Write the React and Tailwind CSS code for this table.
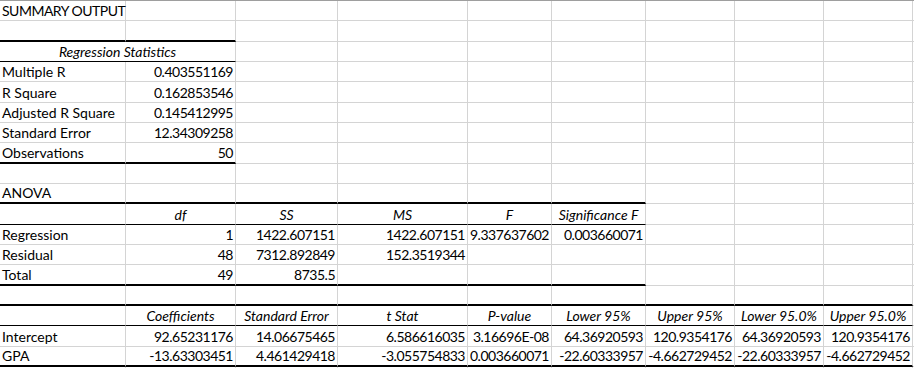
import React from "react";

const rows = [
  { cells: [{ t: "SUMMARY OUTPUT", tight: true }] },
  { cells: [], b: { thick: 2 } },
  { merged: "Regression Statistics", b: { thin: 2 } },
  { cells: [{ t: "Multiple R" }, { t: "0.403551169", a: "r" }] },
  { cells: [{ t: "R Square" }, { t: "0.162853546", a: "r" }] },
  { cells: [{ t: "Adjusted R Square" }, { t: "0.145412995", a: "r" }] },
  { cells: [{ t: "Standard Error" }, { t: "12.34309258", a: "r" }] },
  { cells: [{ t: "Observations" }, { t: "50", a: "r" }], b: { thick: 2 } },
  { cells: [] },
  { cells: [{ t: "ANOVA" }], b: { thick: 6 } },
  {
    cells: [
      { t: "" },
      { t: "df", a: "c", i: true },
      { t: "SS", a: "c", i: true },
      { t: "MS", a: "c", i: true },
      { t: "F", a: "c", i: true },
      { t: "Significance F", a: "c", i: true },
    ],
    b: { thin: 6 },
  },
  {
    cells: [
      { t: "Regression" },
      { t: "1", a: "r" },
      { t: "1422.607151", a: "r" },
      { t: "1422.607151", a: "r" },
      { t: "9.337637602", a: "r" },
      { t: "0.003660071", a: "r" },
    ],
  },
  {
    cells: [
      { t: "Residual" },
      { t: "48", a: "r" },
      { t: "7312.892849", a: "r" },
      { t: "152.3519344", a: "r" },
    ],
  },
  {
    cells: [{ t: "Total" }, { t: "49", a: "r" }, { t: "8735.5", a: "r" }],
    b: { thick: 6 },
  },
  { cells: [], b: { thick: 9 } },
  {
    cells: [
      { t: "" },
      { t: "Coefficients", a: "c", i: true },
      { t: "Standard Error", a: "c", i: true },
      { t: "t Stat", a: "c", i: true },
      { t: "P-value", a: "c", i: true },
      { t: "Lower 95%", a: "c", i: true },
      { t: "Upper 95%", a: "c", i: true },
      { t: "Lower 95.0%", a: "c", i: true },
      { t: "Upper 95.0%", a: "c", i: true },
    ],
    b: { thin: 9 },
  },
  {
    cells: [
      { t: "Intercept" },
      { t: "92.65231176", a: "r" },
      { t: "14.06675465", a: "r" },
      { t: "6.586616035", a: "r" },
      { t: "3.16696E-08", a: "r" },
      { t: "64.36920593", a: "r" },
      { t: "120.9354176", a: "r" },
      { t: "64.36920593", a: "r" },
      { t: "120.9354176", a: "r" },
    ],
  },
  {
    cells: [
      { t: "GPA" },
      { t: "-13.63303451", a: "r" },
      { t: "4.461429418", a: "r" },
      { t: "-3.055754833", a: "r" },
      { t: "0.003660071", a: "r" },
      { t: "-22.60333957", a: "r" },
      { t: "-4.662729452", a: "r" },
      { t: "-22.60333957", a: "r" },
      { t: "-4.662729452", a: "r" },
    ],
    b: { thick: 9 },
  },
  { cells: [] },
];

function Cell({ c, bottom, span }) {
  const isNum = c && c.a === "r";
  const align = isNum
    ? "justify-end pr-[2px]"
    : c && c.a === "c"
    ? "justify-center"
    : "justify-start pl-[2px]";
  const border =
    bottom === "thick"
      ? "border-b-2 border-b-black"
      : bottom === "thin"
      ? "border-b border-b-black"
      : "border-b border-b-[#d4d4d4]";
  const track = isNum
    ? "tracking-[-0.5px]"
    : c && c.tight
    ? "tracking-[-0.5px]"
    : "";
  return (
    <div
      className={`flex items-end overflow-visible whitespace-nowrap border-r border-r-[#d4d4d4] pb-[1px] leading-[17px] ${border} ${align} ${track} ${
        c && c.i ? "italic" : ""
      } ${span ? "col-span-2" : ""}`}
    >
      {c ? c.t : ""}
    </div>
  );
}

export default function App() {
  return (
    <div className="h-[368px] w-[914px] overflow-hidden bg-white text-[14px] text-black [font-family:Lato,'Liberation_Sans',sans-serif]">
      <div className="border-t border-t-[#9e9e9e]">
        <div className="grid grid-cols-[126px_110px_102px_130px_84px_94px_89px_89px_89px_1fr] grid-rows-[20px_21px_20px_20px_21px_20px_20px_21px_20px_20px_21px_20px_20px_21px_20px_20px_21px_20px_20px]">
          {rows.map((row, ri) => {
            const thick = row.b && row.b.thick ? row.b.thick : 0;
            const thin = row.b && row.b.thin ? row.b.thin : 0;
            const kindFor = (ci) =>
              ci < thick ? "thick" : ci < thin ? "thin" : "grid";
            if (row.merged) {
              const out = [
                <Cell
                  key="m"
                  c={{ t: row.merged, a: "c", i: true }}
                  bottom={kindFor(0)}
                  span
                />,
              ];
              for (let ci = 2; ci < 10; ci++) {
                out.push(<Cell key={ci} c={null} bottom={kindFor(ci)} />);
              }
              return <React.Fragment key={ri}>{out}</React.Fragment>;
            }
            const out = [];
            for (let ci = 0; ci < 10; ci++) {
              out.push(
                <Cell key={ci} c={row.cells[ci] || null} bottom={kindFor(ci)} />
              );
            }
            return <React.Fragment key={ri}>{out}</React.Fragment>;
          })}
        </div>
      </div>
    </div>
  );
}
